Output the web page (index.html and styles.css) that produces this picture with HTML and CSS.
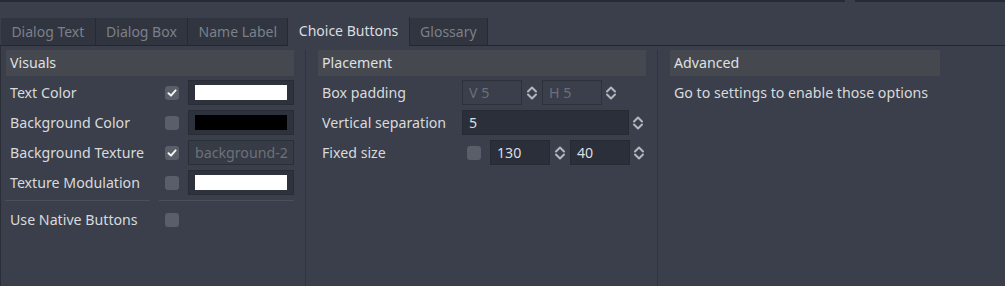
FILE: index.html
```html
<!DOCTYPE html>
<html lang="en">
<head>
    <meta charset="UTF-8">
    <title>Choice Buttons</title>
    <link rel="stylesheet" href="styles.css">
</head>
<body>
    <div class="topstrip">
        <div class="field-edge wide"></div>
        <div class="field-edge rest"></div>
    </div>

    <div class="tabbar">
        <div class="tab">Dialog Text</div>
        <div class="tab">Dialog Box</div>
        <div class="tab">Name Label</div>
        <div class="tab active">Choice Buttons</div>
        <div class="tab">Glossary</div>
    </div>

    <div class="panel">
        <!-- Visuals -->
        <div class="col col-visuals">
            <div class="header">Visuals</div>
            <div class="vrow">
                <span class="label">Text Color</span>
                <span class="check on"></span>
                <span class="colorbtn"><span class="swatch white"></span></span>
            </div>
            <div class="vrow">
                <span class="label">Background Color</span>
                <span class="check"></span>
                <span class="colorbtn"><span class="swatch black"></span></span>
            </div>
            <div class="vrow">
                <span class="label">Background Texture</span>
                <span class="check on"></span>
                <span class="texbtn">background-2</span>
            </div>
            <div class="vrow">
                <span class="label">Texture Modulation</span>
                <span class="check"></span>
                <span class="colorbtn"><span class="swatch white"></span></span>
            </div>
            <div class="hseps">
                <div class="hsep first"></div>
                <div class="hsep second"></div>
            </div>
            <div class="vrow native">
                <span class="label">Use Native Buttons</span>
                <span class="check"></span>
            </div>
        </div>

        <div class="vsep"></div>

        <!-- Placement -->
        <div class="col col-placement">
            <div class="header">Placement</div>
            <div class="prow">
                <span class="label">Box padding</span>
                <div class="fields">
                    <div class="spin disabled"><span class="input">V 5</span><span class="arrows"></span></div>
                    <div class="spin disabled"><span class="input">H 5</span><span class="arrows"></span></div>
                </div>
            </div>
            <div class="prow">
                <span class="label">Vertical separation</span>
                <div class="fields">
                    <div class="spin grow"><span class="input">5</span><span class="arrows"></span></div>
                </div>
            </div>
            <div class="prow">
                <span class="label">Fixed size</span>
                <div class="fields">
                    <span class="check fixed"></span>
                    <div class="spin"><span class="input">130</span><span class="arrows"></span></div>
                    <div class="spin"><span class="input">40</span><span class="arrows"></span></div>
                </div>
            </div>
        </div>

        <div class="vsep"></div>

        <!-- Advanced -->
        <div class="col col-advanced">
            <div class="header">Advanced</div>
            <div class="note">Go to settings to enable those options</div>
        </div>
    </div>

    <script>
        // same up/down icon in every spin box
        const arrowSvg = '<svg width="12" height="16" viewBox="0 0 12 16"><path d="M2 6.5 L6 2.5 L10 6.5 M2 9.5 L6 13.5 L10 9.5" fill="none" stroke="#b4b7bd" stroke-width="2" stroke-linejoin="round" stroke-linecap="round"/></svg>';
        document.querySelectorAll('.arrows').forEach(el => el.innerHTML = arrowSvg);

        const checkSvg = '<svg width="14" height="14" viewBox="0 0 14 14"><path d="M3.5 7.2 L6 9.6 L10.6 4.4" fill="none" stroke="#f2f2f2" stroke-width="2" stroke-linecap="round" stroke-linejoin="round"/></svg>';
        document.querySelectorAll('.check.on').forEach(el => el.innerHTML = checkSvg);
    </script>
</body>
</html>
```

FILE: styles.css
```css
body {
    margin: 0;
    padding: 0;
    width: 1005px;
    height: 286px;
    overflow: hidden;
    background-color: #3a3f4b;
    font-family: "Noto Sans", "DejaVu Sans", sans-serif;
    font-size: 14.2px;
    color: #d9dadc;
}

.topstrip {
    display: flex;
    height: 2px;
}
.field-edge {
    height: 2px;
    background-color: #262a32;
}
.field-edge.wide {
    width: 845px;
}
.field-edge.rest {
    margin-left: 10px;
    flex: 1;
}

.tabbar {
    display: flex;
    margin-top: 15px;
    padding-left: 1px;
    height: 28px;
    border-bottom: 1px solid #23272f;
    font-size: 14px;
}
.tab {
    height: 27px;
    margin-top: 1px;
    line-height: 27px;
    padding: 0 10.4px;
    background-color: #30353f;
    color: #7c808a;
    border-right: 1px solid #262a32;
}
.tab.active {
    margin-top: 0;
    height: 29px;
    margin-bottom: -1px;
    line-height: 28px;
    background-color: #3a3f4b;
    color: #dcdde0;
}

.panel {
    display: flex;
    height: 240px;
    border-left: 1px solid #2a2e37;
    padding: 4px 0 0 5px;
    box-sizing: border-box;
}
.col-visuals {
    width: 288px;
}
.col-placement {
    width: 328px;
}
.col-advanced {
    width: 270px;
}
.vsep {
    width: 1px;
    margin: 0 12px 0 11px;
    background-color: #30343e;
}

.header {
    height: 26px;
    line-height: 25px;
    padding-left: 4px;
    background-color: #46484f;
    color: #dfe0e2;
    margin-bottom: 4px;
}

.label {
    padding-left: 4px;
    white-space: nowrap;
}

.vrow {
    display: grid;
    grid-template-columns: 159px 14px 106px;
    align-items: center;
    height: 25px;
    margin-bottom: 5px;
}
.vrow .check {
    grid-column: 2;
}
.vrow .colorbtn,
.vrow .texbtn {
    grid-column: 3;
    margin-left: 9px;
    width: 106px;
}

.check {
    display: block;
    width: 14px;
    height: 14px;
    border-radius: 3px;
    background-color: #5a5e68;
}
.check svg {
    display: block;
}

.colorbtn {
    display: flex;
    box-sizing: border-box;
    height: 25px;
    padding: 4px 6px;
    background-color: #2e323c;
    border: 1px solid #282c35;
}
.swatch {
    flex: 1;
}
.swatch.white {
    background-color: #ffffff;
}
.swatch.black {
    background-color: #000000;
}

.texbtn {
    box-sizing: border-box;
    height: 25px;
    line-height: 23px;
    padding-left: 6px;
    overflow: hidden;
    white-space: nowrap;
    color: #6d717a;
    background-color: #363b46;
    border: 1px solid #2a2e37;
}

.hseps {
    display: flex;
    height: 1px;
    margin-top: 1px;
}
.hsep {
    height: 1px;
    background-color: #4a4f5a;
}
.hsep.first {
    width: 146px;
    margin-left: -1px;
}
.hsep.second {
    width: 136px;
    margin-left: 9px;
}

.vrow.native {
    margin-top: 6px;
}

.prow {
    display: flex;
    align-items: center;
    height: 25px;
    margin-bottom: 5px;
}
.prow .label {
    width: 140px;
    flex-shrink: 0;
}
.fields {
    display: flex;
    align-items: center;
    flex: 1;
}
.check.fixed {
    flex-shrink: 0;
    margin: 0 9px 0 5px;
}

.spin {
    display: flex;
    align-items: center;
    margin-right: 1px;
}
.spin:last-child {
    margin-right: 0;
}
.spin.grow {
    flex: 1;
}
.spin .input {
    box-sizing: border-box;
    width: 60px;
    height: 25px;
    line-height: 23px;
    padding-left: 6px;
    background-color: #2b2f39;
    border: 1px solid #262a32;
    color: #dcdde0;
}
.spin.grow .input {
    flex: 1;
    width: auto;
}
.spin .arrows {
    display: flex;
    justify-content: center;
    width: 19px;
}
.spin:last-child .arrows {
    width: 17px;
}
.spin .arrows svg {
    display: block;
}
.spin.disabled .input {
    background-color: #3a3f4b;
    border-color: #2d313a;
    color: #6b6f78;
}

.note {
    height: 25px;
    line-height: 25px;
    padding-left: 4px;
}
```
